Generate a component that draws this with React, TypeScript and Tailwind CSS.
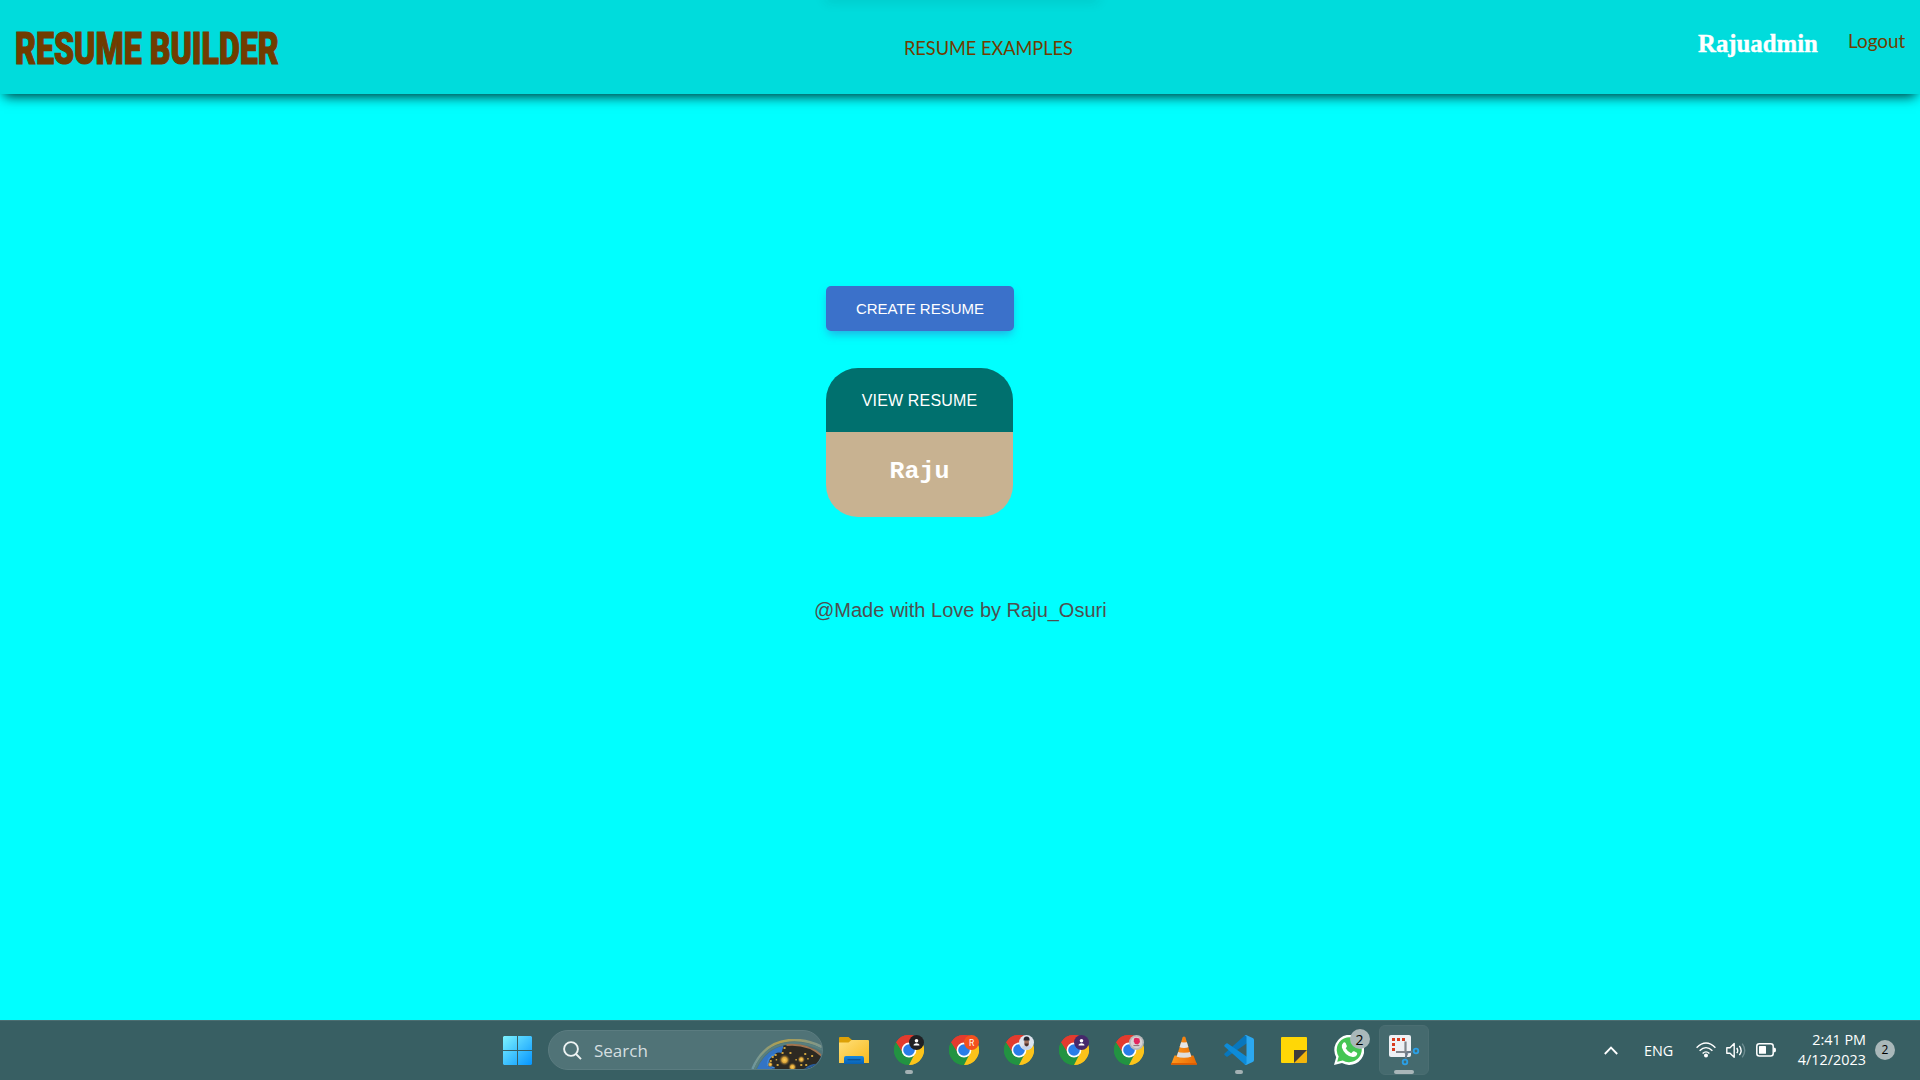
import React from "react";

type Badge = { color: string; kind: "person" | "letter" | "photo" | "flower" };

function ChromeIcon({ badge }: { badge: Badge }) {
  return (
    <svg width="30" height="30" viewBox="0 0 30 30">
      <path d="M15 15 L2 7.5 A15 15 0 0 1 28 7.5 Z" fill="#e33b2e" />
      <path d="M15 15 L28 7.5 A15 15 0 0 1 15 30 Z" fill="#fcc31a" />
      <path d="M15 15 L15 30 A15 15 0 0 1 2 7.5 Z" fill="#229342" />
      <path d="M15 8.2 H28.3 A15 15 0 0 1 15 30 L20.9 18.4 Z" fill="#fcc31a" />
      <path d="M2 7.5 A15 15 0 0 1 28.3 8.2 H15 L9.1 18.4 Z" fill="#e33b2e" />
      <path d="M2 7.5 L9.1 18.4 Q13 23 20.9 18.4 L15 30 A15 15 0 0 1 2 7.5 Z" fill="#229342" />
      <circle cx="15" cy="15" r="7.4" fill="#fff" />
      <circle cx="15" cy="15" r="5.8" fill="#2a7de9" />
      <circle cx="22.5" cy="7.5" r="7.5" fill={badge.color} />
      {badge.kind === "person" && (
        <g fill="#fff">
          <circle cx="22.5" cy="5.8" r="1.8" />
          <path d="M19.6 10.6 V9.8 Q20.2 8.3 22.5 8.3 Q24.8 8.3 25.4 9.8 V10.6 Z" />
        </g>
      )}
      {badge.kind === "letter" && (
        <text x="22.5" y="10.6" fontSize="8.5" fill="#fff" textAnchor="middle" fontFamily="Roboto, sans-serif">
          R
        </text>
      )}
      {badge.kind === "photo" && (
        <g>
          <path d="M17 12.6 Q19 10 22.5 10 Q26 10 28 12.6 Q25.5 15 22.5 15 Q19.5 15 17 12.6Z" fill="#c6d3ea" />
          <rect x="20.3" y="4" width="4.6" height="7.4" rx="2.1" fill="#a06f5c" />
          <path d="M19.6 5.6 Q19.4 1.6 22.6 1.6 Q25.8 1.6 25.6 5.4 Z" fill="#252733" />
          <path d="M20.6 8.6 H24.6 Q24.4 11.2 22.6 11.2 Q20.9 11.2 20.6 8.6Z" fill="#46302e" />
        </g>
      )}
      {badge.kind === "flower" && (
        <g>
          <circle cx="22.5" cy="7.5" r="5.8" fill="#d8d3d4" />
          <path d="M20 3.6 L22 2.8 L25.4 3.6 L26 7 L24 9.4 L21 9 L19.8 6.6Z" fill="#e3265e" />
          <path d="M19.4 10.6 H25.4" stroke="#8b6f78" strokeWidth="1" />
        </g>
      )}
    </svg>
  );
}

function StartIcon() {
  return (
    <svg width="29" height="29" viewBox="0 0 29 29">
      <defs>
        <linearGradient id="start" x1="0" y1="0" x2="29" y2="29" gradientUnits="userSpaceOnUse">
          <stop offset="0" stopColor="#7df3ff" />
          <stop offset="1" stopColor="#0595ff" />
        </linearGradient>
      </defs>
      <g fill="url(#start)">
        <path d="M1 0H14V14H0V1Z" />
        <path d="M15 0H28L29 1V14H15Z" />
        <path d="M0 15H14V29H1L0 28Z" />
        <path d="M15 15H29V28L28 29H15Z" />
      </g>
    </svg>
  );
}

function SearchArt() {
  return (
    <svg width="71" height="30" viewBox="0 0 72 30" preserveAspectRatio="none" className="block">
      <defs>
        <radialGradient id="glow">
          <stop offset="0" stopColor="#ffd257" />
          <stop offset="0.45" stopColor="#dba43a" />
          <stop offset="1" stopColor="#3a3324" stopOpacity="0" />
        </radialGradient>
        <linearGradient id="rim" x1="0" x2="1">
          <stop offset="0" stopColor="#6b96a0" />
          <stop offset="0.4" stopColor="#b5a04a" />
          <stop offset="1" stopColor="#7a9690" />
        </linearGradient>
      </defs>
      <path d="M1.5 30 Q14 1 44 1 Q58 1 72 8" fill="none" stroke="url(#rim)" strokeWidth="2.6" />
      <path d="M4 30 Q15 4 44 4 Q60 4 72 11" fill="none" stroke="#58807f" strokeWidth="2" />
      <path d="M6 30 Q17 6 42 6 Q60 6 72 16 V30 Z" fill="#3374c4" />
      <path d="M33 6.5 Q58 3 72 17 V30 H24 Q14 27 19 19 Q26 12 31 14 Z" fill="#2c2922" />
      <path d="M36 6 Q58 4 72 17" fill="none" stroke="#a1744f" strokeWidth="2" />
      <path d="M17 27 Q16 18 25 15 M24 29 Q16 27 19 23" fill="none" stroke="#3a86dd" strokeWidth="1.5" />
      <path d="M54 30 Q60 24 70 25 L66 30 Z" fill="#265b9c" />
      <circle cx="34" cy="21" r="6" fill="url(#glow)" />
      <circle cx="51" cy="20.5" r="4" fill="url(#glow)" />
      <circle cx="42" cy="28" r="4.5" fill="url(#glow)" />
      <circle cx="19.5" cy="25.5" r="3" fill="url(#glow)" />
      <g fill="#cda23c">
        <rect x="33" y="8" width="2" height="2" /><rect x="39" y="13" width="2" height="2" />
        <rect x="54" y="14" width="2" height="2" /><rect x="61" y="16" width="2" height="2" />
        <rect x="24" y="15" width="2" height="2" /><rect x="31" y="13" width="2" height="2" />
        <rect x="21" y="17" width="2" height="2" /><rect x="26" y="25" width="2" height="2" />
        <rect x="50" y="25" width="2" height="2" /><rect x="55" y="25" width="2" height="2" />
        <rect x="45" y="20" width="1.5" height="1.5" /><rect x="57" y="19" width="1.5" height="1.5" />
        <rect x="25" y="20" width="1.5" height="1.5" /><rect x="19" y="21" width="2" height="2" />
      </g>
    </svg>
  );
}

function ExplorerIcon() {
  return (
    <svg width="30" height="27" viewBox="0 0 30 27">
      <defs>
        <linearGradient id="folder" x1="0" y1="0" x2="1" y2="1">
          <stop offset="0" stopColor="#ffe07a" />
          <stop offset="1" stopColor="#f8b91c" />
        </linearGradient>
        <linearGradient id="tray" x1="0" y1="0" x2="0" y2="1">
          <stop offset="0" stopColor="#1787dc" />
          <stop offset="1" stopColor="#0861b4" />
        </linearGradient>
      </defs>
      <path d="M0 1Q0 0 1 0H9.5L13 3H29V10H0Z" fill="#dda106" />
      <path d="M0 5.5H9.5L12.5 3H29Q30 3 30 4V26H0Z" fill="url(#folder)" />
      <path d="M5 27V21Q5 19 7 19H23Q25 19 25 21V27Z" fill="url(#tray)" />
      <path d="M8.5 22.8H21.5" stroke="#0a4684" strokeWidth="1" />
    </svg>
  );
}

function VlcIcon() {
  return (
    <svg width="26" height="29" viewBox="0 0 26 29">
      <defs>
        <linearGradient id="cone" x1="0" x2="1">
          <stop offset="0" stopColor="#ff9a1e" />
          <stop offset="1" stopColor="#e86a04" />
        </linearGradient>
        <clipPath id="coneShape">
          <path d="M11.7 1Q13 0 14.3 1L21 23Q13 27 5 23Z" />
        </clipPath>
      </defs>
      <path d="M3.5 19.5H22.5L26 28.5H0Z" fill="url(#cone)" />
      <path d="M0 27H26L25.8 28.8H.2Z" fill="#e05e00" />
      <g clipPath="url(#coneShape)">
        <rect width="26" height="29" fill="url(#cone)" />
        <path d="M8 5.5Q13 7.5 18 5.5V11Q13 13 8 11Z" fill="#e5e5e5" />
        <path d="M5 15.5Q13 18 21 15.5V20.5Q13 23 5 20.5Z" fill="#dedede" />
      </g>
    </svg>
  );
}

function CodeIcon() {
  return (
    <svg width="30" height="30" viewBox="0 0 30 30">
      <path d="M.5 18.5L20.5 .7Q21.3 0 22 .2L24 1V7.5L3.7 21.5Q3 22 2.3 21.5L.5 19.9Q0 19.2 .5 18.5Z" fill="#0877bd" />
      <path d="M.5 11.5L20.5 29.3Q21.3 30 22 29.8L24 29V22.5L3.7 8.5Q3 8 2.3 8.5L.5 10.1Q0 10.8 .5 11.5Z" fill="#0d8bd8" />
      <path d="M22 0L28.7 3Q30 3.6 30 5V25Q30 26.4 28.7 27L22 30Q21 30.2 20.5 29.5Q22.5 30 22.5 28V2Q22.5 0 20.5 .5Q21 -.2 22 0Z" fill="#2ba8f0" />
    </svg>
  );
}

function NotesIcon() {
  return (
    <svg width="26" height="26" viewBox="0 0 26 26">
      <path d="M1 0H25Q26 0 26 1V13L13 26H1Q0 26 0 25V1Q0 0 1 0Z" fill="#ffd706" />
      <path d="M13 26V13H26V25Q26 26 25 26Z" fill="#f3b60c" />
      <path d="M13 13H26L13 26Z" fill="#403c3c" />
    </svg>
  );
}

function WhatsAppIcon() {
  return (
    <svg width="30" height="30" viewBox="0 0 30 30">
      <path d="M0 30L2.2 22.2A15 15 0 1 1 8 28Z" fill="#fff" />
      <path d="M3.2 26.8L4.7 21.4A12.5 12.5 0 1 1 8.8 25.4Z" fill="#45c554" />
      <path d="M9.3 7.7Q10.8 6.8 11.6 8L12.9 11Q13 11.8 11.7 13.2Q13.7 17 17.2 18.3L18.9 16.5Q19.4 16 20.2 16.3L22.9 17.7Q23.6 18.2 22.9 20Q21.7 22.3 18.7 22.1Q10.5 20.8 7.9 12.6Q7.4 9.5 9.3 7.7Z" fill="#fff" />
    </svg>
  );
}

function SnipIcon() {
  return (
    <svg width="31" height="31" viewBox="0 0 31 31">
      <rect width="22" height="22" rx="2" fill="#eef1f5" />
      <g fill="#d83b1e">
        <rect x="3" y="3" width="3" height="3" /><rect x="8" y="3" width="3" height="3" /><rect x="13" y="3" width="3" height="3" />
        <rect x="3" y="8" width="3" height="3" /><rect x="3" y="13" width="3" height="3" />
      </g>
      <path d="M16.5 6.5V17.5L18 20.5M7 17H19L22.5 17" fill="none" stroke="#81878e" strokeWidth="2.2" />
      <path d="M17.8 17.5L16.6 23.5M18 17.5L23.5 16.5" stroke="#68798a" strokeWidth="2" />
      <circle cx="16" cy="27" r="2.3" fill="none" stroke="#2aa0e8" strokeWidth="1.8" />
      <circle cx="27" cy="16" r="2.3" fill="none" stroke="#2aa0e8" strokeWidth="1.8" />
    </svg>
  );
}

function Slot({ children, mark }: { children: React.ReactNode; mark?: boolean }) {
  return (
    <div className="relative flex h-[60px] w-[55px] items-center justify-center">
      {children}
      {mark && <span className="absolute bottom-[6px] left-1/2 h-1 w-2 -translate-x-1/2 rounded-full bg-[#a3b1b4]" />}
    </div>
  );
}

function Header() {
  return (
    <header className="relative flex h-[94px] items-start bg-[#00dcdc] text-[#703c00] shadow-[0_6px_12px_-4px_rgba(0,0,0,0.85)]">
      <div className="absolute inset-x-0 top-0 h-3 overflow-hidden">
        <div className="absolute -top-1 left-[826px] h-1 w-[272px] shadow-[0_0_12px_rgba(0,60,60,0.25)]" />
      </div>
      <div className="w-[904px] pl-[15px] pt-[22px]">
        <h1 className="inline-block origin-left scale-x-[0.731] whitespace-nowrap font-['Roboto',sans-serif] text-[44px] font-black leading-[54px] [-webkit-text-stroke:1.2px_#703c00]">
          RESUME BUILDER
        </h1>
      </div>
      <div className="w-[794px] pt-8">
        <a className="inline-block origin-left scale-x-[0.907] whitespace-nowrap font-['Lato',sans-serif] text-[20px] leading-[30px]">
          RESUME EXAMPLES
        </a>
      </div>
      <span className="mt-[29px] w-[150px] font-['Liberation_Serif',serif] text-[24.8px] font-bold leading-[30px] text-white [-webkit-text-stroke:0.4px_#fff]">
        Rajuadmin
      </span>
      <a className="mt-[25px] inline-block origin-left scale-x-[0.945] font-['Lato',sans-serif] text-[20px] leading-[30px]">Logout</a>
    </header>
  );
}

function Taskbar() {
  return (
    <footer className="flex h-[60px] items-center bg-[#385f63] font-['Open_Sans',sans-serif] text-white shadow-[inset_0_1px_0_#4c6e71]">
      <div className="ml-[503px] w-[45px]"><StartIcon /></div>
      <div className="relative flex h-10 w-[275px] items-center overflow-hidden rounded-full border border-[#5b7c80] bg-[#507377]">
        <svg width="19" height="19" viewBox="0 0 19 19" className="ml-[14px]" fill="none" stroke="#eef3f3" strokeWidth="1.9">
          <circle cx="8" cy="8" r="6.9" /><path d="M13 13L18 18.2" />
        </svg>
        <span className="ml-3 pt-px text-[17px] text-[#d5dfe0]">Search</span>
        <div className="absolute bottom-0 right-0"><SearchArt /></div>
      </div>
      <div className="ml-[3.5px] flex">
        <Slot><ExplorerIcon /></Slot>
        <Slot mark><ChromeIcon badge={{ color: "#202124", kind: "person" }} /></Slot>
        <Slot><ChromeIcon badge={{ color: "#f4511e", kind: "letter" }} /></Slot>
        <Slot><ChromeIcon badge={{ color: "#dde4ee", kind: "photo" }} /></Slot>
        <Slot><ChromeIcon badge={{ color: "#46286b", kind: "person" }} /></Slot>
        <Slot><ChromeIcon badge={{ color: "#b9b9bb", kind: "flower" }} /></Slot>
        <Slot><VlcIcon /></Slot>
        <Slot mark><CodeIcon /></Slot>
        <Slot><NotesIcon /></Slot>
        <Slot>
          <WhatsAppIcon />
          <span className="absolute left-[28px] top-[9px] flex h-5 w-5 items-center justify-center rounded-full bg-[#a9b8ba] text-[14px] text-black">2</span>
        </Slot>
        <Slot>
          <div className="relative flex h-[50px] w-[50px] items-start rounded-md border border-[#4b6e72] bg-[#456a6e] pl-[9px] pt-[9px]">
            <SnipIcon />
            <span className="absolute bottom-0 left-[14px] h-1 w-5 rounded-full bg-[#a9b6b9]" />
          </div>
        </Slot>
      </div>
      <div className="ml-auto flex items-center pr-[25px]">
        <svg width="14" height="9" viewBox="0 0 14 9" className="mr-[26px]" fill="none" stroke="#fff" strokeWidth="1.8"><path d="M.8 8L7 1.6L13.2 8" /></svg>
        <span className="w-[52px] pt-px text-[14.4px]">ENG</span>
        <svg width="20" height="16" viewBox="0 0 20 16" className="mr-[10px]" fill="none" stroke="#fff" strokeWidth="1.4">
          <path d="M.6 5.8Q10 -3.6 19.4 5.8M3.6 8.8Q10 2.4 16.4 8.8M6.6 11.6Q10 8.2 13.4 11.6" />
          <circle cx="10" cy="13.5" r="1.3" fill="#fff" />
        </svg>
        <svg width="20" height="17" viewBox="0 0 20 17" className="mr-[10px]" fill="none" stroke="#fff" strokeWidth="1.4">
          <path d="M.8 5.8H4L8.2 1.6V15.2L4 11.2H.8Z" strokeLinejoin="round" />
          <path d="M10.8 5.8Q12.6 8.5 10.8 11.2M13.4 3.8Q16.8 8.5 13.4 13.2" />
          <path d="M16.2 1.6Q21.2 8.5 16.2 15.4" stroke="#6e8d91" />
        </svg>
        <svg width="20" height="14" viewBox="0 0 20 14" className="mr-[20px]">
          <rect x=".8" y=".8" width="16.4" height="12.2" rx="2.5" fill="none" stroke="#fff" strokeWidth="1.5" />
          <rect x="3" y="3" width="7" height="7.8" rx=".6" fill="#fff" />
          <path d="M18 4.8H19Q20 5 20 7Q20 9 19 9.2H18Z" fill="#fff" />
        </svg>
        <div className="w-[70px] whitespace-nowrap text-right text-[14.4px] leading-5">
          <div>2:41 PM</div>
          <div>4/12/2023</div>
        </div>
        <span className="ml-[9px] flex h-5 w-5 items-center justify-center rounded-full bg-[#a9b8ba] text-[12px] text-black">2</span>
      </div>
    </footer>
  );
}

export default function App() {
  return (
    <div className="flex h-[1080px] w-[1920px] flex-col overflow-hidden bg-[#00ffff]">
      <Header />
      <main className="flex flex-1 flex-col items-start pl-[826px] pt-[192px] font-['Liberation_Sans',sans-serif]">
        <button className="h-[45px] w-[188px] rounded-[5px] bg-[#3b71ca] pt-px text-[15px] text-white shadow-[0_5px_10px_-2px_rgba(59,113,202,0.6)]">
          CREATE RESUME
        </button>
        <section className="mt-[37px] w-[187px] overflow-hidden rounded-[32px] text-center text-white">
          <div className="flex h-16 items-center justify-center bg-[#00706e] pt-px text-[16px] tracking-[0.15px]">VIEW RESUME</div>
          <div className="flex h-[85px] items-center justify-center bg-[#c8b291] pb-[5px] font-['Liberation_Mono',monospace] text-[25px] font-bold">
            <span className="inline-block scale-y-[0.94]">Raju</span>
          </div>
        </section>
        <p className="-ml-[12px] mt-[78px] text-[20px] leading-[30px] text-[#4f4f4f]">@Made with Love by Raju_Osuri</p>
      </main>
      <Taskbar />
    </div>
  );
}
